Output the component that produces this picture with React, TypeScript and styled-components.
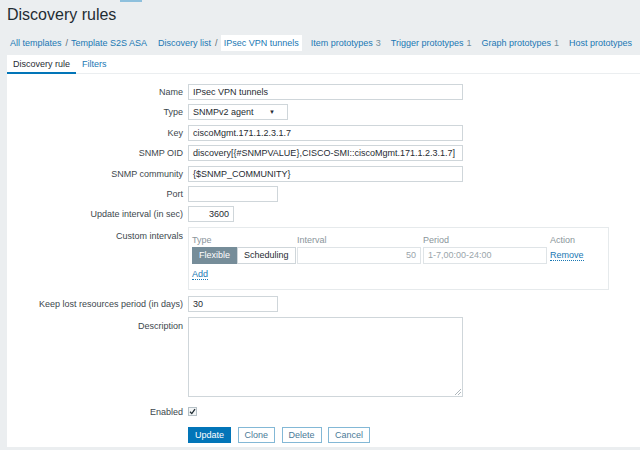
import React from "react";
import styled, { createGlobalStyle } from "styled-components";

const Global = createGlobalStyle`
  html, body { margin: 0; padding: 0; background: #ebeef0; }
  body { font-family: "Liberation Sans", Arial, sans-serif; font-size: 9px; color: #1f2c33; overflow: hidden; }
  * { box-sizing: border-box; }
`;

const Page = styled.div`
  width: 640px;
  height: 450px;
  display: flex;
  flex-direction: column;
  background: #ebeef0;
`;

const TopStrip = styled.div`
  height: 3px;
  display: flex;
`;

const TopMark = styled.div`
  margin-left: 120px;
  width: 22px;
  height: 2px;
  background: #8ec0dd;
`;

const Title = styled.h1`
  margin: 0;
  height: 27px;
  padding: 2px 0 0 7px;
  font-size: 16px;
  font-weight: normal;
  color: #1f2c33;
  line-height: 20px;
`;

const Nav = styled.nav`
  height: 25px;
  display: flex;
  align-items: center;
  padding-left: 10px;
  white-space: nowrap;
  overflow: hidden;
`;

const Crumbs = styled.div<{ $gap: number }>`
  display: flex;
  align-items: center;
  height: 16px;
  margin-right: ${(p) => p.$gap}px;
`;

const NavLink = styled.span<{ $current?: boolean }>`
  color: #1a78b4;
  height: 16px;
  line-height: 16px;
  padding: 0 ${(p) => (p.$current ? "3px" : "0")};
  background: ${(p) => (p.$current ? "#ffffff" : "transparent")};
`;

const Sep = styled.span`
  color: #5d6b73;
  margin: 0 3px 0 4px;
`;

const Count = styled.span`
  color: #768d99;
  margin-left: 3px;
`;

const NavItem = styled.span`
  color: #1a78b4;
  margin-right: 10px;
`;

const Panel = styled.div`
  margin-left: 7px;
  flex: 1;
  background: #ffffff;
  display: flex;
  flex-direction: column;
  border-bottom: 3px solid #ebeef0;
`;

const Tabs = styled.div`
  height: 19px;
  display: flex;
  border-bottom: 1px solid #ebeef0;
`;

const Tab = styled.div<{ $active?: boolean }>`
  padding: 0 6px;
  height: 19px;
  line-height: 18px;
  color: ${(p) => (p.$active ? "#1f2c33" : "#1a78b4")};
  border-bottom: 2px solid ${(p) => (p.$active ? "#0275b8" : "transparent")};
`;

const Form = styled.div`
  display: grid;
  grid-template-columns: 176px 1fr;
  column-gap: 5px;
  row-gap: 4.4px;
  padding-top: 10px;
  align-items: center;
`;

const Label = styled.div<{ $top?: boolean; $shift?: number }>`
  text-align: right;
  color: #3d474d;
  align-self: ${(p) => (p.$top ? "start" : "center")};
  padding-top: ${(p) => (p.$top ? "4px" : "0")};
  margin-top: ${(p) => p.$shift ?? 0}px;
  white-space: nowrap;
`;

const Input = styled.div<{ $w: number; $right?: boolean }>`
  width: ${(p) => p.$w}px;
  height: 16px;
  border: 1px solid #cfd6da;
  background: #fff;
  padding: 0 4px;
  line-height: 14px;
  color: #1f2c33;
  text-align: ${(p) => (p.$right ? "right" : "left")};
  white-space: nowrap;
  overflow: hidden;
`;

const Select = styled.div`
  width: 100px;
  height: 16px;
  border: 1px solid #cfd6da;
  padding: 0 4px;
  line-height: 15px;
  display: flex;
  justify-content: space-between;
  align-items: center;
`;

const Arrow = styled.span`
  font-size: 6px;
  margin-right: 8px;
  color: #1f2c33;
`;

const IntervalBox = styled.div`
  width: 421px;
  height: 63px;
  margin-bottom: 2px;
  border: 1px solid #e6eaec;
  padding: 5px 3px;
  display: grid;
  grid-template-columns: 105px 126px 127px 1fr;
  grid-template-rows: 14px 18px 1fr;
  align-items: center;
`;

const ColHead = styled.div`
  color: #8a959b;
`;

const Segmented = styled.div`
  display: flex;
  height: 17px;
`;

const SegBtn = styled.div<{ $on?: boolean }>`
  height: 17px;
  line-height: 15px;
  padding: 0 6px;
  border: 1px solid ${(p) => (p.$on ? "#768d99" : "#cfd6da")};
  background: ${(p) => (p.$on ? "#768d99" : "#fff")};
  color: ${(p) => (p.$on ? "#fff" : "#1f2c33")};
`;

const CellInput = styled.div<{ $right?: boolean }>`
  width: 124px;
  height: 17px;
  border: 1px solid #dfe4e7;
  padding: 0 4px;
  line-height: 15px;
  color: #9aa5ab;
  text-align: ${(p) => (p.$right ? "right" : "left")};
`;

const Link = styled.span`
  color: #1a78b4;
  border-bottom: 1px dotted #1a78b4;
  justify-self: start;
  line-height: 10px;
`;

const AddCell = styled.div`
  grid-column: 1 / -1;
  align-self: center;
`;

const TextArea = styled.div`
  width: 275px;
  height: 80px;
  border: 1px solid #cfd6da;
  position: relative;
`;

const Grip = styled.svg`
  position: absolute;
  right: 1px;
  bottom: 1px;
`;

const CheckRow = styled.div`
  margin-top: 6px;
  display: flex;
`;

const Check = styled.div`
  width: 9px;
  height: 9px;
  border: 1px solid #b5c0c6;
  background: #f3f5f6;
  display: flex;
  align-items: center;
  justify-content: center;
`;

const Buttons = styled.div`
  display: flex;
  gap: 6.5px;
  margin-top: 6px;
`;

const Button = styled.div<{ $primary?: boolean }>`
  height: 16px;
  line-height: 14px;
  padding: 0 6px;
  border: 1px solid ${(p) => (p.$primary ? "#0275b8" : "#83b8d6")};
  background: ${(p) => (p.$primary ? "#0275b8" : "#fff")};
  color: ${(p) => (p.$primary ? "#fff" : "#4a7a98")};
`;

export default function App() {
  return (
    <>
      <Global />
      <Page>
        <TopStrip>
          <TopMark />
        </TopStrip>
        <Title>Discovery rules</Title>
        <Nav>
          <Crumbs $gap={11}>
            <NavLink>All templates</NavLink>
            <Sep>/</Sep>
            <NavLink>Template S2S ASA</NavLink>
          </Crumbs>
          <Crumbs $gap={9}>
            <NavLink>Discovery list</NavLink>
            <Sep>/</Sep>
            <NavLink $current>IPsec VPN tunnels</NavLink>
          </Crumbs>
          <NavItem>
            Item prototypes<Count>3</Count>
          </NavItem>
          <NavItem>
            Trigger prototypes<Count>1</Count>
          </NavItem>
          <NavItem>
            Graph prototypes<Count>1</Count>
          </NavItem>
          <NavItem>Host prototypes</NavItem>
        </Nav>
        <Panel>
          <Tabs>
            <Tab $active>Discovery rule</Tab>
            <Tab>Filters</Tab>
          </Tabs>
          <Form>
            <Label>Name</Label>
            <Input $w={275}>IPsec VPN tunnels</Input>
            <Label>Type</Label>
            <Select>
              <span>SNMPv2 agent</span>
              <Arrow>▼</Arrow>
            </Select>
            <Label>Key</Label>
            <Input $w={275}>ciscoMgmt.171.1.2.3.1.7</Input>
            <Label>SNMP OID</Label>
            <Input $w={275}>discovery[{"{#SNMPVALUE}"},CISCO-SMI::ciscoMgmt.171.1.2.3.1.7]</Input>
            <Label>SNMP community</Label>
            <Input $w={275}>{"{$SNMP_COMMUNITY}"}</Input>
            <Label>Port</Label>
            <Input $w={90} />
            <Label>Update interval (in sec)</Label>
            <Input $w={46} $right>
              3600
            </Input>
            <Label $top>Custom intervals</Label>
            <IntervalBox>
              <ColHead>Type</ColHead>
              <ColHead>Interval</ColHead>
              <ColHead>Period</ColHead>
              <ColHead>Action</ColHead>
              <Segmented>
                <SegBtn $on>Flexible</SegBtn>
                <SegBtn>Scheduling</SegBtn>
              </Segmented>
              <CellInput $right>50</CellInput>
              <CellInput>1-7,00:00-24:00</CellInput>
              <Link>Remove</Link>
              <AddCell>
                <Link>Add</Link>
              </AddCell>
            </IntervalBox>
            <Label>Keep lost resources period (in days)</Label>
            <Input $w={90}>30</Input>
            <Label $top>Description</Label>
            <TextArea>
              <Grip width="6" height="6" viewBox="0 0 6 6">
                <path d="M6 0 L0 6 M6 3 L3 6" stroke="#9aa5ab" strokeWidth="0.8" />
              </Grip>
            </TextArea>
            <Label $shift={6}>Enabled</Label>
            <CheckRow>
              <Check>
                <svg width="7" height="7" viewBox="0 0 7 7">
                  <path d="M1 3.8 L2.8 5.6 L6 1.2" stroke="#1f2c33" strokeWidth="1.3" fill="none" />
                </svg>
              </Check>
            </CheckRow>
            <div />
            <Buttons>
              <Button $primary>Update</Button>
              <Button>Clone</Button>
              <Button>Delete</Button>
              <Button>Cancel</Button>
            </Buttons>
          </Form>
        </Panel>
      </Page>
    </>
  );
}
